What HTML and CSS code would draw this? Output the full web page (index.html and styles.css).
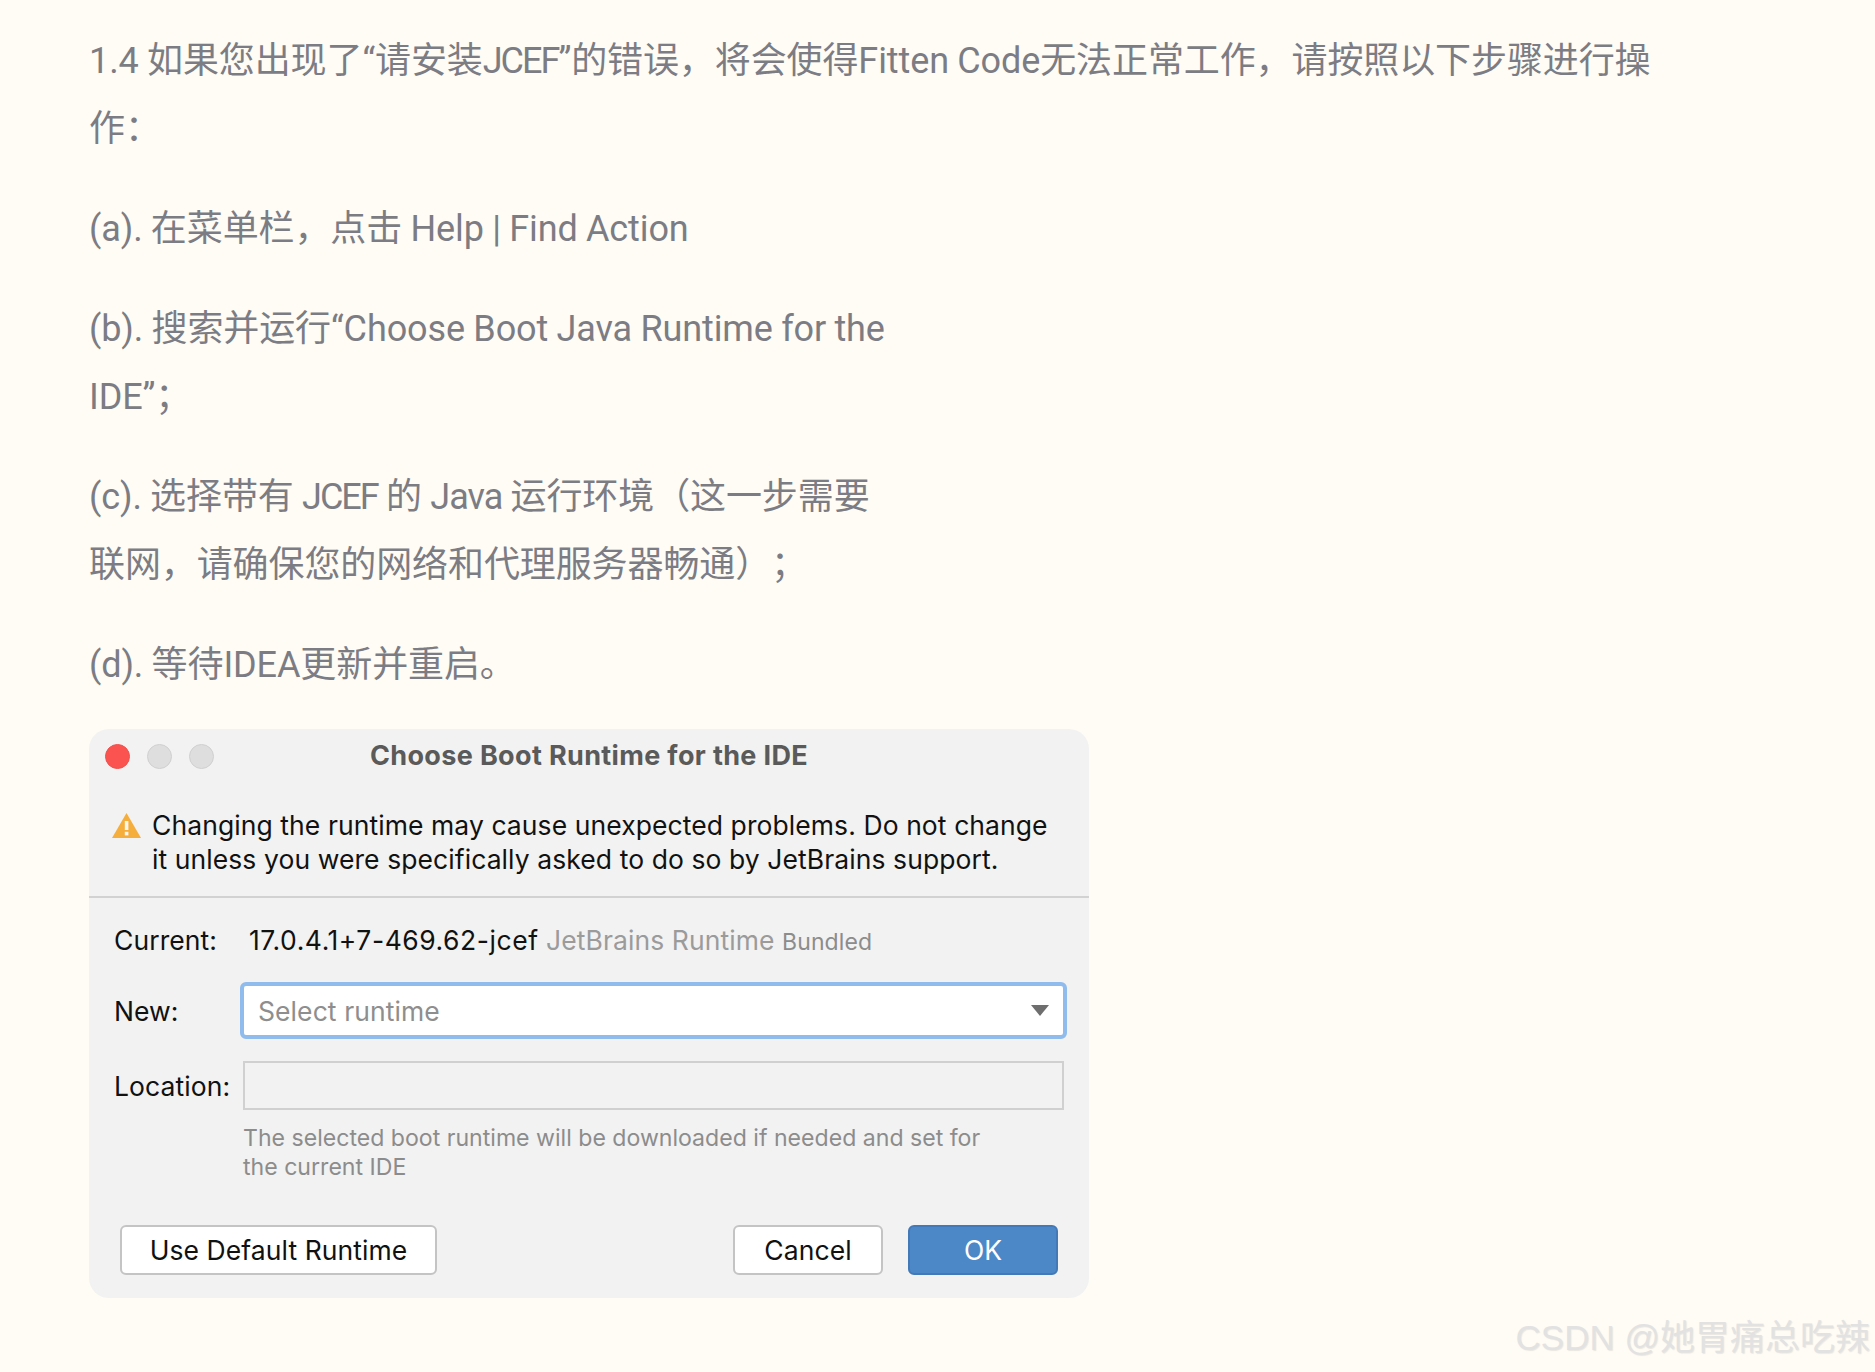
FILE: index.html
```html
<!DOCTYPE html>
<html lang="zh-CN">
<head>
<meta charset="utf-8">
<title>Fitten Code</title>
<link rel="stylesheet" href="styles.css">
</head>
<body>
<main class="article">
  <p class="para">1.4 如果您出现了“请安装<span class="caps">JCEF</span>”的错误，将会使得Fitten Code无法正常工作，请按照以下步骤进行操<br>作：</p>
  <p class="para">(a). 在菜单栏，点击 Help | Find Action</p>
  <p class="para">(b). 搜索并运行“Choose Boot Java Runtime for the<br>IDE”；</p>
  <p class="para">(c). 选择带有 <span class="caps">JCEF</span> 的 <span class="tight">Java</span> 运行环境（这一步需要<br>联网，请确保您的网络和代理服务器畅通）；</p>
  <p class="para">(d). 等待IDEA更新并重启。</p>

  <section class="dialog">
    <header class="titlebar">
      <div class="lights">
        <span class="light light-red"></span>
        <span class="light"></span>
        <span class="light"></span>
      </div>
      <h1 class="title">Choose Boot Runtime for the IDE</h1>
    </header>
    <div class="warning">
      <svg class="warn-icon" viewBox="0 0 29 25" width="29" height="25" aria-hidden="true">
        <path d="M14.5 0 L29 25 L0 25 Z" fill="#f5ae3c"/>
        <rect x="12.8" y="8" width="3.6" height="9" fill="#fdf6e8"/>
        <rect x="12.8" y="18.8" width="3.6" height="3.6" fill="#fdf6e8"/>
      </svg>
      <p class="warn-text">Changing the runtime may cause unexpected problems. Do not change<br>it unless you were specifically asked to do so by JetBrains support.</p>
    </div>
    <div class="form">
      <div class="row row-current">
        <span class="label">Current:</span>
        <span class="value"><span class="version">17.0.4.1+7-469.62-jcef</span> <span class="muted">JetBrains Runtime</span> <span class="bundled">Bundled</span></span>
      </div>
      <div class="row row-new">
        <span class="label">New:</span>
        <div class="combo">
          <span class="placeholder">Select runtime</span>
          <span class="caret"></span>
        </div>
      </div>
      <div class="row row-location">
        <span class="label">Location:</span>
        <div class="field"></div>
      </div>
      <p class="hint">The selected boot runtime will be downloaded if needed and set for<br>the current IDE</p>
    </div>
    <footer class="actions">
      <button class="btn btn-wide">Use Default Runtime</button>
      <span class="spacer"></span>
      <button class="btn">Cancel</button>
      <button class="btn btn-primary">OK</button>
    </footer>
  </section>
</main>
<div class="watermark">CSDN @她胃痛总吃辣</div>
</body>
</html>
```

FILE: styles.css
```css
* { box-sizing: border-box; }
html, body { margin: 0; height: 100%; }
body {
  background: #fffcf5;
  overflow: hidden;
  position: relative;
}
.article {
  padding: 27px 0 0 89px;
}
.para {
  margin: 0 0 32px;
  font-family: Roboto, "Noto Sans CJK SC", sans-serif;
  font-weight: 400;
  font-size: 36px;
  line-height: 68px;
  letter-spacing: -0.1px;
  word-spacing: -0.5px;
  color: #7c7c84;
  white-space: nowrap;
  text-spacing-trim: space-all;
}
.caps {
  letter-spacing: -2px;
}
.tight {
  letter-spacing: -1px;
}
.dialog {
  width: 1000px;
  height: 569px;
  margin-top: -2px;
  background: #f2f2f2;
  border-radius: 20px;
  font-family: Inter, "Liberation Sans", sans-serif;
  font-size: 26.5px;
  letter-spacing: 0.08px;
  color: #111;
  display: flex;
  flex-direction: column;
}
.titlebar {
  position: relative;
  height: 56px;
  display: flex;
  align-items: center;
  justify-content: center;
}
.lights {
  position: absolute;
  left: 16px;
  top: 15px;
  display: flex;
  gap: 17px;
}
.light {
  width: 25px;
  height: 25px;
  border-radius: 50%;
  background: #dedede;
  border: 1px solid #d0d0d0;
}
.light-red {
  background: #fb5450;
  border-color: #f0504c;
}
.title {
  margin: 0 0 4px;
  font-size: 27px;
  font-weight: 700;
  letter-spacing: 0.35px;
  color: #5a5a5a;
}
.warning {
  height: 113px;
  border-bottom: 2px solid #d2d2d2;
  padding: 24px 0 0 23px;
  display: flex;
  gap: 11px;
}
.warn-icon {
  margin-top: 4px;
  flex: none;
}
.warn-text {
  margin: 0;
  line-height: 33.5px;
  white-space: nowrap;
}
.form {
  padding: 25px 0 0 25px;
}
.row {
  display: flex;
  align-items: center;
}
.label {
  width: 129px;
  flex: none;
}
.row-current {
  height: 34px;
}
.row-current .label {
  width: 135px;
}
.version {
  letter-spacing: 0.55px;
}
.muted {
  color: #9b9b9b;
}
.bundled {
  color: #8c8c8c;
  font-size: 23px;
}
.row-new {
  margin-top: 25px;
}
.combo {
  width: 827px;
  height: 57px;
  margin-left: -3px;
  background: #fff;
  border: 4px solid #8fbcec;
  border-radius: 6px;
  padding: 0 14px;
  display: flex;
  align-items: center;
  justify-content: space-between;
}
.placeholder {
  color: #8e8e8e;
}
.caret {
  width: 0;
  height: 0;
  border-left: 9px solid transparent;
  border-right: 9px solid transparent;
  border-top: 11px solid #6e6e6e;
}
.row-location {
  margin-top: 22px;
}
.field {
  width: 821px;
  height: 49px;
  border: 2px solid #d0d0d0;
  background: #f2f2f2;
}
.hint {
  margin: 14px 0 0 129px;
  font-size: 23.1px;
  line-height: 29px;
  letter-spacing: 0;
  color: #8c8c8c;
  white-space: nowrap;
}
.actions {
  display: flex;
  gap: 25px;
  padding: 0 31px;
  margin-top: 43px;
}
.spacer {
  flex: 1;
}
.btn {
  width: 150px;
  height: 50px;
  padding: 0;
  background: #fff;
  border: 2px solid #c4c4c4;
  border-radius: 6px;
  font: inherit;
  letter-spacing: inherit;
  color: #111;
}
.btn-wide {
  width: 317px;
}
.btn-primary {
  background: #4c88c8;
  border-color: #4279b6;
  color: #fff;
}
.watermark {
  position: absolute;
  right: 5px;
  top: 1316px;
  font-family: "Liberation Sans", "Noto Sans CJK SC", sans-serif;
  font-size: 35px;
  line-height: 44px;
  color: #e2e2e2;
  text-shadow: 1px 1px 1px rgba(150, 150, 150, 0.2);
  white-space: nowrap;
}
```
